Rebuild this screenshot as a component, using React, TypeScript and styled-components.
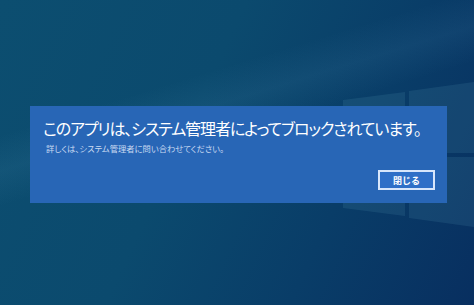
import styled, { createGlobalStyle } from 'styled-components';

const GlobalStyle = createGlobalStyle`
  html, body {
    margin: 0;
    padding: 0;
    background: #0b4a6e;
  }
  #root {
    width: 474px;
    height: 305px;
    overflow: hidden;
  }
`;

const Desktop = styled.div`
  position: relative;
  width: 474px;
  height: 305px;
  overflow: hidden;
  display: flex;
  flex-direction: column;
  background:
    linear-gradient(163deg, rgba(255, 255, 255, 0) 30%, rgba(120, 190, 230, 0.07) 38%, rgba(255, 255, 255, 0) 46%),
    linear-gradient(115deg, #0c4e70 0%, #0b4a6e 40%, #093d68 70%, #082f60 100%);
  font-family: 'Noto Sans CJK JP', 'Noto Sans', sans-serif;
`;

const LogoLayer = styled.svg`
  position: absolute;
  left: 0;
  top: 0;
  pointer-events: none;
`;

const Dialog = styled.section`
  position: relative;
  margin: 106px 0 0 30px;
  width: 417px;
  height: 97px;
  box-sizing: border-box;
  padding: 10px 14px 0 13px;
  background: #2866b6;
  display: flex;
  flex-direction: column;
`;

const Title = styled.h1`
  margin: 0;
  font-size: 16px;
  line-height: 24px;
  font-weight: 400;
  color: #ffffff;
  font-feature-settings: 'palt';
  letter-spacing: -1.1px;
  white-space: nowrap;
`;

const Detail = styled.p`
  margin: 2px 0 0 3px;
  font-size: 8.3px;
  line-height: 12px;
  color: #c9daf2;
  font-feature-settings: 'palt';
  white-space: nowrap;
`;

const Actions = styled.div`
  display: flex;
  justify-content: flex-end;
  margin-top: auto;
  padding-bottom: 13px;
`;

const CloseButton = styled.button`
  width: 57px;
  height: 20px;
  margin-right: -2px;
  box-sizing: border-box;
  border: 2px solid #d8e6fb;
  background: #2f6fc7;
  color: #ffffff;
  font-family: inherit;
  font-size: 9px;
  font-weight: 700;
  padding: 0;
  display: flex;
  align-items: center;
  justify-content: center;
`;

export default function App() {
  return (
    <>
      <GlobalStyle />
      <Desktop>
        <LogoLayer width="474" height="305" viewBox="0 0 474 305">
          <polygon points="343,100 405,92 405,153 343,154" fill="rgba(110,180,200,0.13)" />
          <polygon points="409,91 474,82 474,153 409,153" fill="rgba(110,180,200,0.13)" />
          <polygon points="343,157 405,157 405,216 343,208" fill="rgba(110,180,200,0.13)" />
          <polygon points="409,157 474,157 474,227 409,218" fill="rgba(110,180,200,0.13)" />
        </LogoLayer>
        <Dialog>
          <Title>このアプリは、システム管理者によってブロックされています。</Title>
          <Detail>詳しくは、システム管理者に問い合わせてください。</Detail>
          <Actions>
            <CloseButton>閉じる</CloseButton>
          </Actions>
        </Dialog>
      </Desktop>
    </>
  );
}
